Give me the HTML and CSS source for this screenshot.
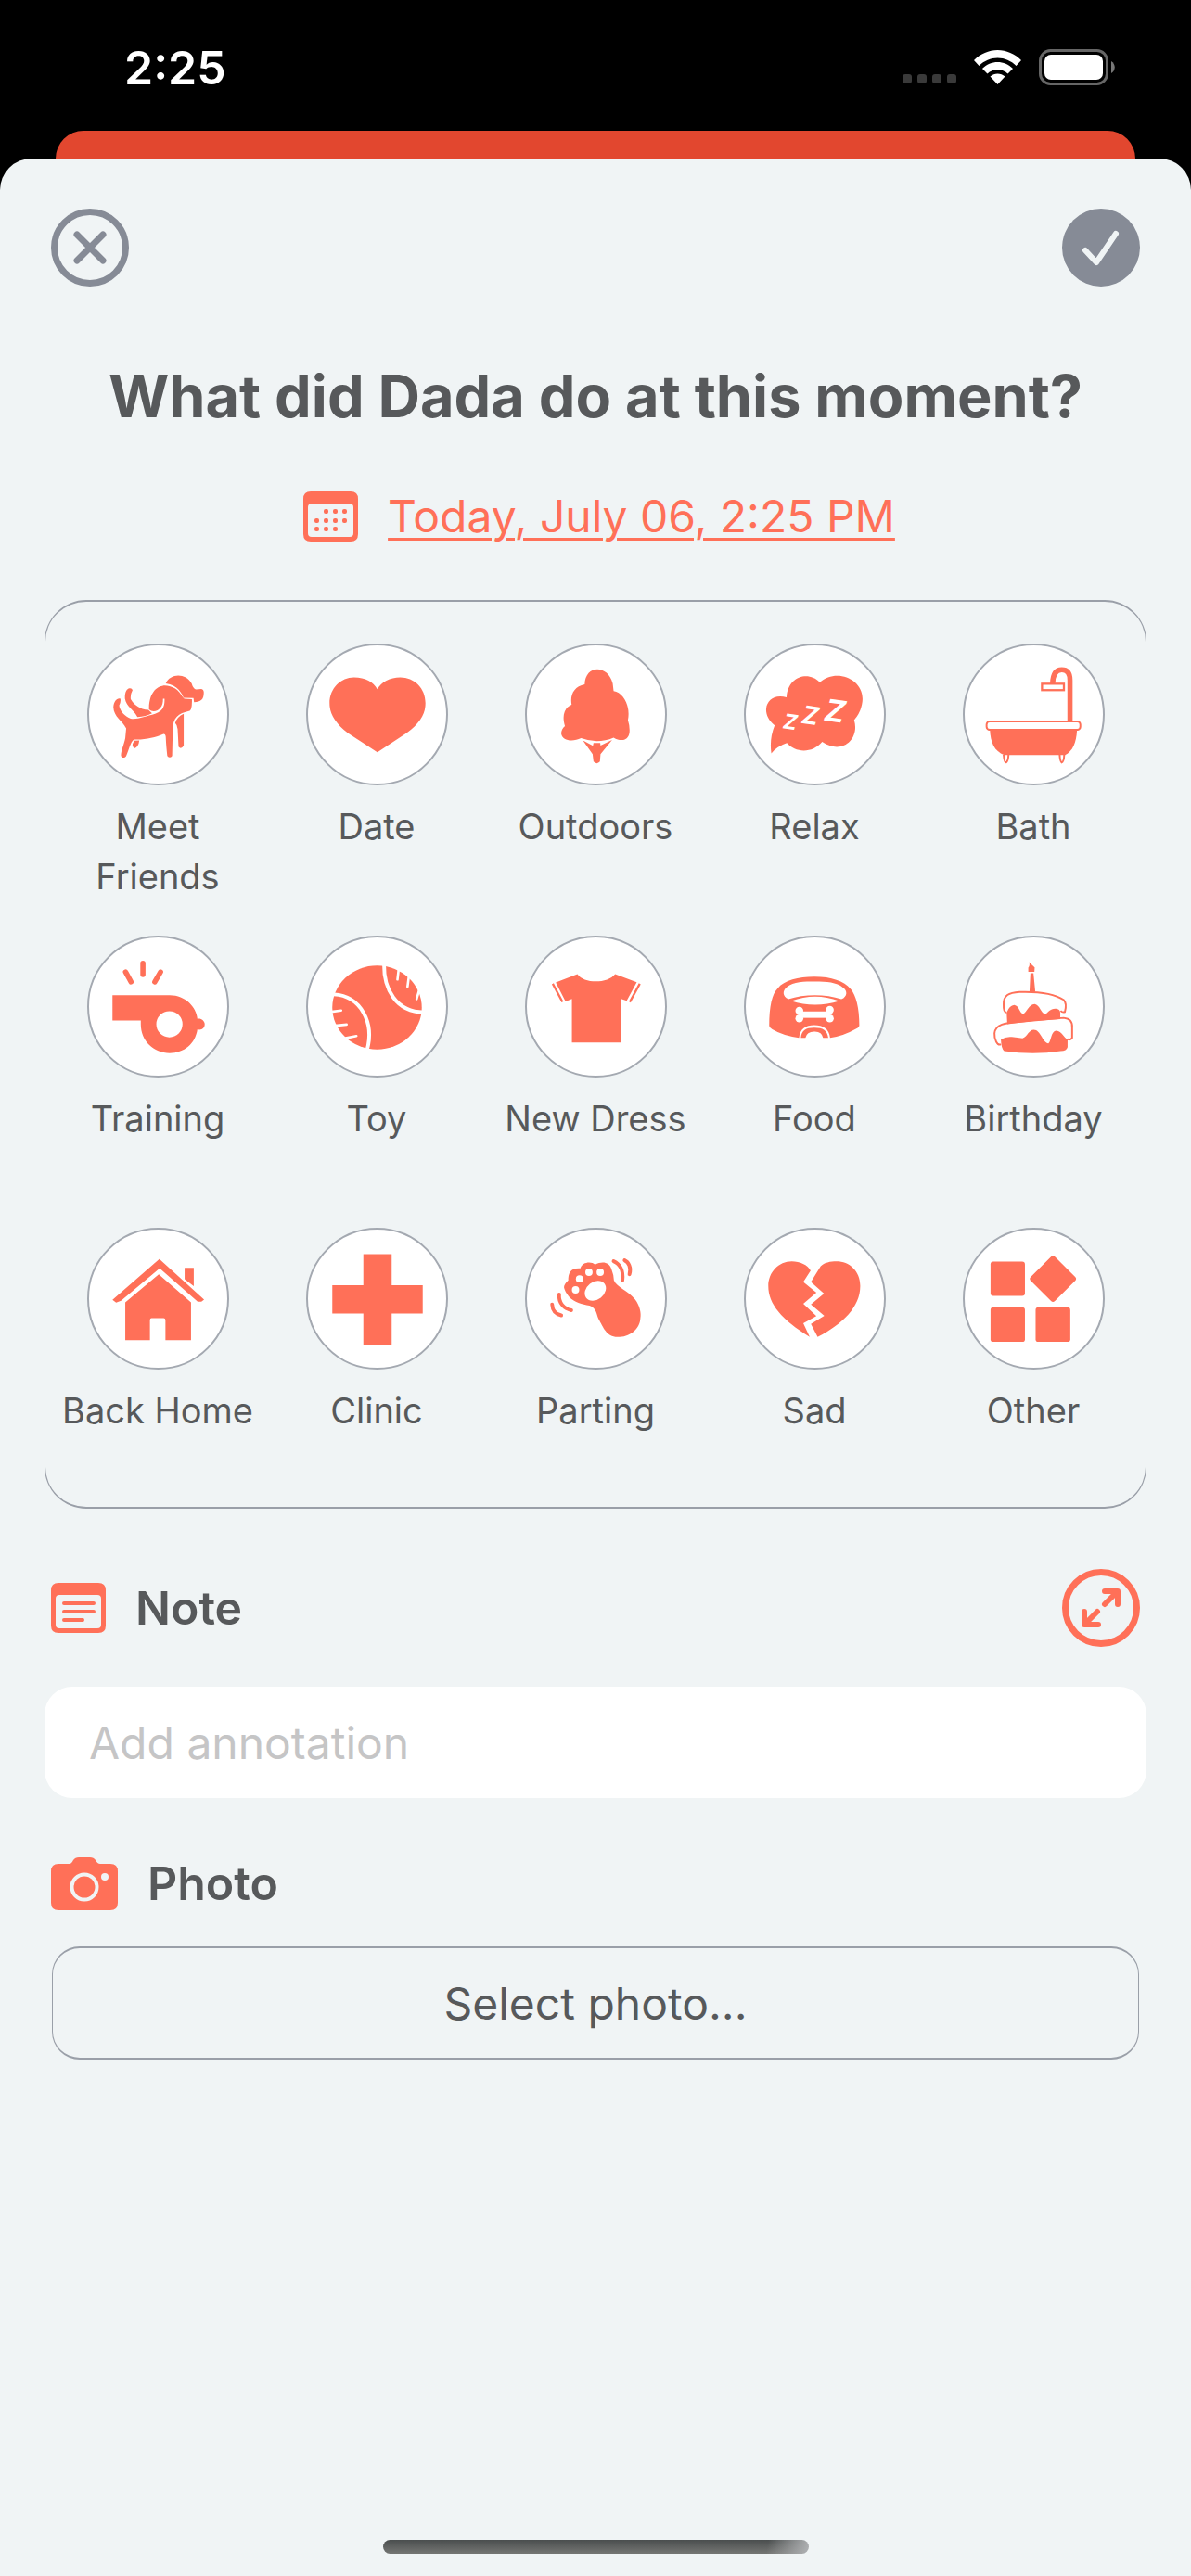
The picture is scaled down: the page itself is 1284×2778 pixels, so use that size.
FILE: index.html
```html
<!DOCTYPE html>
<html lang="en">
<head>
<meta charset="utf-8">
<meta name="viewport" content="width=device-width, initial-scale=1">
<title>New moment</title>
<link rel="stylesheet" href="styles.css">
</head>
<body>
<header class="status">
  <time class="clock">2:25</time>
  <div class="indicators">
    <svg class="signal" viewBox="0 0 58 10" aria-hidden="true"><rect width="10" height="10" rx="3"/><rect x="16" width="10" height="10" rx="3"/><rect x="32" width="10" height="10" rx="3"/><rect x="48" width="10" height="10" rx="3"/></svg>
    <svg class="wifi" viewBox="0 0 51 37" aria-hidden="true"><path d="M25.500 0C35 0 44 4 51 11L45.500 17C40 11.500 33 8.500 25.500 8.500S11 11.500 5.500 17L0 11C7 4 16 0 25.500 0ZM25.500 13C31.500 13 37.500 15.500 42 20L36.500 25.500C33.500 22.500 29.500 21 25.500 21S17.500 22.500 14.500 25.500L9 20C13.500 15.500 19.500 13 25.500 13ZM25.500 25.500C28.500 25.500 31 26.500 33.500 28.500L25.500 37L17.500 28.500C20 26.500 22.500 25.500 25.500 25.500Z"/></svg>
    <svg class="battery" viewBox="0 0 82 39" aria-hidden="true"><rect x="1.500" y="1.500" width="72" height="36" rx="11" fill="none" stroke="#666" stroke-width="3"/><rect x="6" y="6" width="63" height="27" rx="7" fill="#fff"/><path d="M78 13C83 16 83 23 78 26Z" fill="#777"/></svg>
  </div>
</header>
<div class="behind"></div>
<main class="sheet">
  <div class="toolbar">
    <button class="round" type="button" aria-label="Close"><svg viewBox="0 0 84 84"><circle cx="42" cy="42" r="38.500" fill="none" stroke="#868b96" stroke-width="7"/><path d="M28 28L56 56M56 28L28 56" stroke="#868b96" stroke-width="7" stroke-linecap="round"/></svg></button>
    <button class="round" type="button" aria-label="Save"><svg viewBox="0 0 84 84"><circle cx="42" cy="42" r="42" fill="#868b96"/><path d="M25 45L37 58L58 27" fill="none" stroke="#f0f4f5" stroke-width="6" stroke-linecap="round" stroke-linejoin="round"/></svg></button>
  </div>
  <h1 class="title">What did Dada do at this moment?</h1>
  <div class="when">
    <svg class="card-icon" viewBox="0 0 59 54" aria-hidden="true"><path fill-rule="evenodd" d="M8 0H51Q59 0 59 8V46Q59 54 51 54H8Q0 54 0 46V8Q0 0 8 0ZM9 13Q5 13 5 17V45Q5 49 9 49H50Q54 49 54 45V17Q54 13 50 13Z"/><g><rect x="22" y="19" width="5" height="5" rx="2"/><rect x="32" y="19" width="5" height="5" rx="2"/><rect x="42" y="19" width="5" height="5" rx="2"/><rect x="12" y="29" width="5" height="5" rx="2"/><rect x="22" y="29" width="5" height="5" rx="2"/><rect x="32" y="29" width="5" height="5" rx="2"/><rect x="42" y="29" width="5" height="5" rx="2"/><rect x="12" y="38" width="5" height="5" rx="2"/><rect x="22" y="38" width="5" height="5" rx="2"/><rect x="32" y="38" width="5" height="5" rx="2"/></g></svg>
    <a class="date" href="#">Today, July 06, 2:25 PM</a>
  </div>

  <div class="activities">
    <button class="activity" type="button"><span class="disc"><svg viewBox="103 75 454 454"><path d="M206 250C196 246 184 258 183 278C184 310 212 322 225 348L222 380C218 400 207 425 208 438C212 446 222 445 225 438C234 418 238 395 250 384C285 386 320 378 348 366Q354 366 355 376C356 400 358 420 360 438Q368 448 376 438L378 350C378 315 395 298 434 290Q442 284 441 252L416 250C404 240 398 210 352 207C330 208 300 225 300 285Q312 296 328 288C344 278 346 265 346 250L351 250C352 275 346 290 320 300C290 308 260 320 240 316C220 308 204 290 202 272Q208 262 206 250ZM236 216C226 218 220 230 221 250C225 275 248 285 262 310Q290 308 310 298L298 287C270 286 250 270 240 252Q238 236 246 222Q244 215 236 216ZM355 200C370 166 420 165 440 200Q445 218 455 220L472 218Q480 220 480 230C480 255 470 260 448 262L446 248L414 247C408 235 395 205 355 200ZM386 330Q392 310 414 300L414 405Q405 418 397 408L394 350Q393 336 386 330ZM252 388L268 387Q266 408 252 413Q242 405 248 395Z"/></svg></span><span class="label">Meet Friends</span></button>
    <button class="activity" type="button"><span class="disc"><svg viewBox="811 75 454 454"><path d="M1039 219C1052 195 1080 180 1114 180C1160 180 1197 215 1197 265C1197 300 1180 330 1135 363L1039 426L942 363C900 330 882 300 882 265C882 215 920 180 962 180C1000 180 1026 195 1039 219Z"/></svg></span><span class="label">Date</span></button>
    <button class="activity" type="button"><span class="disc"><svg viewBox="3 3 454 454"><path d="M193 131C194 65 270 65 285 128L288 153C322 158 344 205 335 248Q342 270 340 290C336 316 312 320 288 306Q236 328 181 308C155 320 120 318 116 293Q116 278 128 268C118 235 125 208 150 198C144 165 158 138 193 131ZM187 315L220 333L222 324H244L245 332L283 314L245 360L243 385Q233 396 222 385L219 360Z"/></svg></span><span class="label">Outdoors</span></button>
    <button class="activity" type="button"><span class="disc"><svg viewBox="3 3 454 454"><path d="M98 266C45 225 72 155 137 174C140 105 210 85 246 125C300 75 395 115 386 188Q382 222 359 248C378 310 320 365 254 320C220 360 165 355 138 324Q105 335 87 358Q80 310 98 266Z"/><g class="snore"><text class="z-small" transform="translate(123 275) rotate(8)">Z</text><text class="z-mid" transform="translate(184 258) rotate(8)">Z</text><text class="z-big" transform="translate(258 249) rotate(8)">Z</text></g></svg></span><span class="label">Relax</span></button>
    <button class="activity" type="button"><span class="disc"><svg viewBox="3 3 454 454"><path d="M86 280C88 322 100 350 133 363H333C358 350 370 322 372 280Z"/><g fill="none" stroke="#ff7058"><path d="M349 252V117Q349 83 322 83Q293 83 292 128" stroke-width="17"/><rect x="257" y="129" width="72" height="21" stroke-width="7" fill="#fff"/><rect x="75" y="253" width="308" height="27" rx="10" stroke-width="6" fill="#fff"/><path d="M131 362Q133 388 139 388Q146 384 147 362M315 362Q316 384 322 388Q329 386 330 362" stroke-width="6"/></g></svg></span><span class="label">Bath</span></button>

    <button class="activity" type="button"><span class="disc"><svg viewBox="103 60 454 454"><path fill-rule="evenodd" d="M180 250H368C420 250 456 290 459 327C470 324 483 333 483 345C483 358 472 366 459 362C452 410 415 440 368 440C315 440 273 400 273 345V333H180ZM367 302A43 43 0 1 0 367 388A43 43 0 1 0 367 302Z"/><path d="M280 145V182M223 173L241 206M338 173L319 206" stroke="#ff7058" stroke-width="17" stroke-linecap="round"/></svg></span><span class="label">Training</span></button>
    <button class="activity" type="button"><span class="disc"><svg viewBox="811 60 454 454"><ellipse cx="1038" cy="290" rx="147" ry="138"/><g fill="none" stroke="#fff"><path d="M1061 148C1060 230 1100 305 1192 306M896 247C985 252 1030 340 1005 430" stroke-width="12"/><path d="M1109 164L1105 198M1143 184L1138 222M1178 228L1168 262M888 304L920 300M900 350L938 346M934 391L970 384" stroke-width="8" stroke-linecap="round"/></g></svg></span><span class="label">Toy</span></button>
    <button class="activity" type="button"><span class="disc"><svg viewBox="3 3 454 454"><path d="M169 123C190 155 268 155 293 123L364 150L331 211L313 205V348H151V205L130 213L98 151Z"/><path d="M88 155L120 215M374 155L341 215" stroke="#ff7058" stroke-width="7"/></svg></span><span class="label">New Dress</span></button>
    <button class="activity" type="button"><span class="disc"><svg viewBox="8 15 454 454"><path d="M85 305C85 240 95 200 112 183C135 155 180 144 233 144C290 144 330 158 353 185C370 205 381 245 381 305Q378 312 370 315Q330 338 285 345C282 315 262 303 233 303C205 303 186 315 183 345Q130 338 95 317Q86 312 85 305ZM189 345C191 320 205 311 233 311C262 311 276 320 279 345H262Q258 323 233 324Q208 324 204 345Z"/><g fill="#fff"><path d="M148 218C128 208 128 190 143 178C165 160 200 160 235 160C275 160 305 162 328 180C342 190 343 208 322 218C270 200 200 200 148 218ZM158 224Q235 195 315 224Q275 236 236 236Q195 236 158 224Z"/><rect x="186" y="258" width="98" height="21"/><circle cx="184" cy="256" r="13"/><circle cx="184" cy="281" r="13"/><circle cx="284" cy="253" r="13"/><circle cx="284" cy="281" r="13"/></g></svg></span><span class="label">Food</span></button>
    <button class="activity" type="button"><span class="disc"><svg viewBox="715 15 454 454"><path d="M927 96Q932 102 945 113L944 128H924V114Q930 108 927 96ZM931 132H941L947 194H928ZM853 262Q862 238 878 237C895 240 895 265 907 266C920 262 925 234 945 234C962 236 965 265 980 267C990 262 995 248 1015 249Q1028 250 1029 262V283Q940 287 855 300ZM834 350Q850 340 870 342Q890 345 905 346C922 340 925 318 942 318C965 318 970 360 990 363C1000 355 998 322 1016 321C1035 322 1040 345 1053 349V375Q1050 388 1030 388Q940 402 845 388Q835 380 834 350Z"/><path d="M853 261Q842 262 843 235C842 205 860 196 895 194C960 192 1010 200 1040 220Q1052 232 1044 260Q1036 262 1030 256M834 366C822 372 812 350 813 330C815 300 850 295 890 292L1040 279Q1070 282 1068 310V345Q1062 354 1053 349" fill="none" stroke="#ff7058" stroke-width="6"/></svg></span><span class="label">Birthday</span></button>

    <button class="activity" type="button"><span class="disc"><svg viewBox="163 75 454 454"><path d="M394 172L541 305L532 312H520L395 202L268 309L252 315L240 306ZM477 201H507V261L477 238ZM392 222L498 314V438H414V372Q414 366 408 366H368Q363 366 363 372V438H282V314Z"/></svg></span><span class="label">Back Home</span></button>
    <button class="activity" type="button"><span class="disc"><svg viewBox="871 75 454 454"><path d="M1053 156H1146V258H1248V351H1146V453H1053V351H951V258H1053Z"/></svg></span><span class="label">Clinic</span></button>
    <button class="activity" type="button"><span class="disc"><svg viewBox="14 15 454 454"><path d="M136 205Q136 195 150 182C150 160 155 140 190 142C195 122 225 118 238 130C260 118 285 120 292 145Q300 165 300 182C310 205 345 215 370 245C385 265 390 290 387 305C385 345 350 368 312 368C275 368 265 335 250 310C242 295 245 275 220 265C195 260 170 255 152 235Q138 218 136 205Z"/><g fill="#fff"><circle cx="218" cy="155" r="12"/><circle cx="255" cy="155" r="12"/><circle cx="187" cy="177" r="12"/><circle cx="174" cy="213" r="12"/><ellipse cx="239" cy="216" rx="38" ry="29" transform="rotate(-38 239 216)"/></g><path d="M299 119C320 128 332 150 328 182M335 116C348 122 358 140 351 162M120 228C118 255 135 275 160 280M97 261C98 280 108 293 127 297" fill="none" stroke="#ff7058" stroke-width="12" stroke-linecap="round"/></svg></span><span class="label">Parting</span></button>
    <button class="activity" type="button"><span class="disc"><svg viewBox="722 15 454 454"><path d="M935 150C925 130 900 119 873 119C830 119 796 155 796 200C796 260 840 310 932 368L911 323L954 299L911 259L954 222L911 187ZM936 187L968 135C980 123 1000 119 1020 119C1062 119 1098 150 1098 200C1098 270 1040 325 958 368L936 325L980 298L936 261L979 225Z"/></svg></span><span class="label">Sad</span></button>
    <button class="activity" type="button"><span class="disc"><svg viewBox="3 3 454 454"><rect x="88" y="108" width="113" height="113" rx="9"/><rect x="88" y="258" width="113" height="114" rx="9"/><rect x="236" y="258" width="114" height="114" rx="9"/><rect x="237" y="109" width="112" height="112" rx="9" transform="rotate(45 293 165)"/></svg></span><span class="label">Other</span></button>
  </div>

  <div class="section-head note-head">
    <svg class="card-icon" viewBox="0 0 59 54" aria-hidden="true"><path fill-rule="evenodd" d="M8 0H51Q59 0 59 8V46Q59 54 51 54H8Q0 54 0 46V8Q0 0 8 0ZM9 13Q5 13 5 17V45Q5 49 9 49H50Q54 49 54 45V17Q54 13 50 13Z"/><path d="M14 22H46M14 31H46M14 40H34" stroke="#ff7058" stroke-width="4" stroke-linecap="round"/></svg>
    <label class="section-title" for="note">Note</label>
    <button class="round expand" type="button" aria-label="Expand note"><svg viewBox="0 0 84 84" fill="none" stroke="#ff7058"><circle cx="42" cy="42" r="38.500" stroke-width="7"/><path d="M46 24H60V38M59 25L46 38M24 46V60H39M25 59L38 46" stroke-width="6" stroke-linecap="round" stroke-linejoin="round"/></svg></button>
  </div>
  <input class="note" id="note" type="text" placeholder="Add annotation">

  <div class="section-head photo-head">
    <svg class="camera" viewBox="0 0 72 57" aria-hidden="true"><path fill="#ff7058" d="M8 7H20Q22 7 24 3Q26 0 30 0H42Q46 0 48 3Q50 7 53 7H64Q72 7 72 15V49Q72 57 64 57H8Q0 57 0 49V15Q0 7 8 7Z"/><circle cx="36" cy="32" r="13.500" fill="none" stroke="#f0f4f5" stroke-width="4"/><circle cx="58" cy="21" r="4" fill="#f0f4f5"/></svg>
    <h2 class="section-title">Photo</h2>
  </div>
  <button class="select" type="button">Select photo...</button>
  <div class="home-bar"></div>
</main>
</body>
</html>
```
FILE: styles.css
```css
* { box-sizing: border-box; }
body {
  margin: 0;
  min-height: 100vh;
  display: flex;
  flex-direction: column;
  background: #000;
  color: #57595b;
  font-family: Inter, "Liberation Sans", sans-serif;
}
button {
  padding: 0;
  border: 0;
  background: none;
  color: inherit;
  font: inherit;
  cursor: pointer;
}
svg { display: block; }

.status {
  height: 141px;
  padding: 4px 82px 0 134px;
  display: flex;
  align-items: center;
  justify-content: space-between;
  color: #fff;
}
.clock { font-size: 50px; font-weight: 600; }
.indicators { display: flex; align-items: flex-end; gap: 19px; }
.signal { width: 58px; height: 12px; padding-bottom: 2px; fill: #3a3a3a; }
.wifi { width: 51px; height: 38px; fill: #fff; padding-bottom: 1px; }
.battery { width: 82px; height: 39px; }

.behind {
  height: 30px;
  margin: 0 60px;
  border-radius: 30px 30px 0 0;
  background: #e2472f;
}
.sheet {
  flex: 1;
  display: flex;
  flex-direction: column;
  padding: 54px 48px 24px;
  border-radius: 34px 34px 0 0;
  background: #f0f4f5;
}
.toolbar { display: flex; justify-content: space-between; padding: 0 7px; }
.round { width: 84px; height: 84px; }

.title {
  margin: 76px 0 0;
  font-size: 63px;
  line-height: 84px;
  font-weight: 700;
  text-align: center;
}
.when {
  display: flex;
  align-items: center;
  justify-content: center;
  gap: 32px;
  margin-top: 58px;
  padding-left: 8px;
}
.card-icon { width: 59px; height: 54px; fill: #ff7058; }
.date {
  color: #ff7058;
  font-size: 48px;
  line-height: 60px;
  text-decoration-thickness: 3px;
  text-underline-offset: 6px;
}

.activities {
  display: grid;
  grid-template-columns: repeat(5, 1fr);
  row-gap: 37px;
  margin-top: 60px;
  padding: 45px 3px 23px;
  border: solid #9a9fa8;
  border-width: 2px 1px;
  border-radius: 45px;
}
.activity {
  display: flex;
  flex-direction: column;
  align-items: center;
  gap: 17px;
  min-height: 278px;
}
.disc {
  width: 153px;
  height: 153px;
  border: 2px solid #a4a9b1;
  border-radius: 50%;
  background: #fff;
  fill: #ff7058;
}
.snore { fill: #fff; font-style: italic; font-weight: 700; }
.z-small { font-size: 68px; }
.z-mid { font-size: 82px; }
.z-big { font-size: 100px; }
.label { padding: 0 8px; font-size: 38px; line-height: 54px; }

.section-head { display: flex; align-items: center; padding: 0 7px; gap: 32px; }
.note-head { margin-top: 65px; }
.photo-head { margin-top: 62px; }
.section-title { margin: 0; font-size: 50px; line-height: 60px; font-weight: 600; }
.expand { margin-left: auto; }
.note {
  width: 100%;
  height: 120px;
  margin-top: 43px;
  padding: 0 48px;
  border: 0;
  border-radius: 30px;
  background: #fff;
  color: inherit;
  font: 400 48px Inter, "Liberation Sans", sans-serif;
}
.note::placeholder { color: #c5c5c6; opacity: 1; }
.camera { width: 72px; height: 57px; }
.select {
  height: 122px;
  margin: 38px 8px 0;
  border: solid #9a9fa8;
  border-width: 2px 1px;
  border-radius: 30px;
  font-size: 48px;
}
.home-bar {
  width: 459px;
  height: 15px;
  margin: auto auto 0;
  border-radius: 8px;
  background: linear-gradient(100deg, transparent 90%, #b0b2b4), linear-gradient(#4a4e4e, #757674);
}
```
